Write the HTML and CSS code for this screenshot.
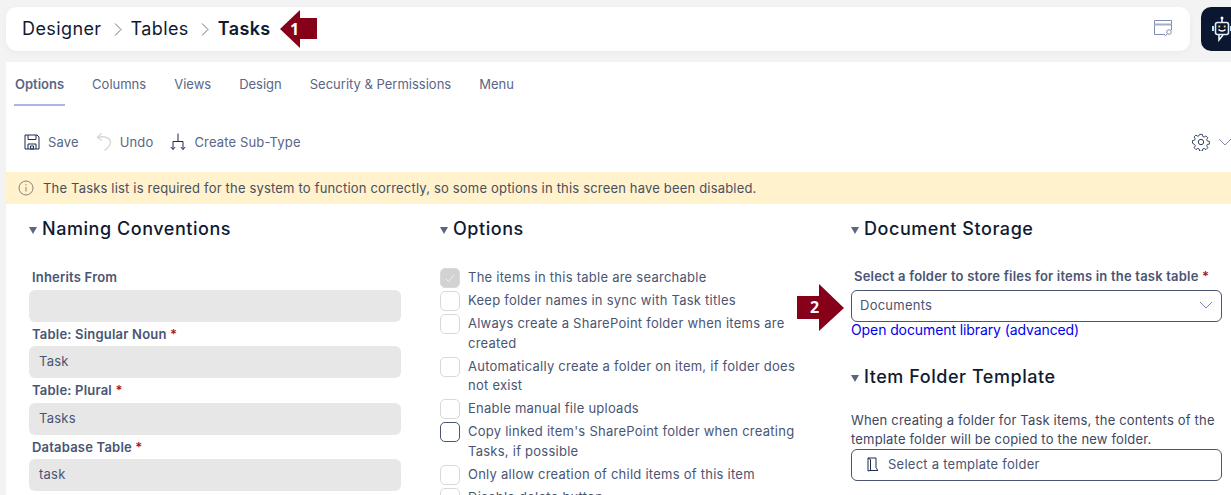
FILE: index.html
```html
<!DOCTYPE html>
<html lang="en">
<head>
  <meta charset="UTF-8">
  <title>Tasks - Table Designer</title>
  <link rel="stylesheet" href="styles.css">
</head>
<body>

<div class="topbar">
  <div class="crumbs">
    <span>Designer</span>
    <svg class="crumb-sep" viewBox="0 0 8 13"><path d="M1 .5l6 6-6 6"/></svg>
    <span>Tables</span>
    <svg class="crumb-sep" viewBox="0 0 8 13"><path d="M1 .5l6 6-6 6"/></svg>
    <b>Tasks</b>
    <svg class="window-icon" viewBox="0 0 19 17">
      <path d="M11 14.500H.5V.5h17V10"/>
      <path class="thick" d="M.5 4.500h17"/>
      <circle cx="15" cy="12" r="2.300"/>
      <path d="M13.300 13.800L10.800 16.400"/>
    </svg>
  </div>
  <div class="bot">
    <svg viewBox="0 0 22 26">
      <circle cx="10" cy="2" r="1.500" fill="#fff"/>
      <path d="M10 3v3" stroke="#fff" stroke-width="1.500"/>
      <rect x="3.500" y="6.500" width="13" height="12" rx="2" fill="none" stroke="#dff1ff" stroke-width="1.600"/>
      <path d="M1 10v5M19 10v5" stroke="#bfe4ff" stroke-width="2"/>
      <path d="M6.400 9.500h1.800v2H6.400zM11.800 9.500h1.800v2h-1.800z" fill="#ffc55c"/>
      <path d="M6.500 13.500c2 2 5 2 7 0" fill="none" stroke="#fff" stroke-width="1.500"/>
      <path d="M7 19v5l4-5" fill="none" stroke="#fff" stroke-width="1.500"/>
    </svg>
  </div>
</div>

<div class="panel">
  <div class="tabs">
    <a class="tab active">Options</a>
    <a class="tab">Columns</a>
    <a class="tab">Views</a>
    <a class="tab">Design</a>
    <a class="tab">Security &amp; Permissions</a>
    <a class="tab">Menu</a>
  </div>

  <div class="toolbar">
    <button class="tool">
      <svg viewBox="0 0 16 16" class="tool-icon">
        <path d="M1 1h12l2 2v12H1z"/>
        <path d="M4 1v4.500h8V1"/>
        <path d="M4 15v-5h8v5"/>
        <path d="M6.500 12h3v3h-3z"/>
      </svg>
      Save
    </button>
    <button class="tool">
      <svg viewBox="0 0 16 18" class="tool-icon undo">
        <path d="M5.500 .5L1.500 4.500l4.500 3"/>
        <path d="M1.500 4.500C7 3 13.500 4 14.500 8.500c.6 2.800-1.500 5.500-6 9"/>
      </svg>
      Undo
    </button>
    <button class="tool">
      <svg viewBox="0 0 16 18" class="tool-icon">
        <path d="M8 .5v8M3 8.500h10M3 8.500v8M13 8.500v8"/>
        <path d="M.8 14l2.200 2.500L5.200 14M10.800 14l2.200 2.500 2.200-2.500"/>
      </svg>
      Create Sub-Type
    </button>
    <div class="settings">
      <svg class="gear" viewBox="0 0 20 20">
        <path d="M8.400 1h3.200l.5 2.500 1.600.7 2.200-1.400 2.200 2.200-1.400 2.200.7 1.600 2.500.5v3.200l-2.500.5-.7 1.600 1.400 2.200-2.200 2.200-2.200-1.400-1.600.7-.5 2.500H8.400l-.5-2.500-1.600-.7-2.200 1.400-2.200-2.200 1.400-2.200-.7-1.600L0 11.500V8.300l2.500-.5.700-1.600-1.400-2.200L4 1.800l2.200 1.400 1.600-.7z" transform="translate(.6 .6) scale(.94)"/>
        <circle cx="10" cy="10" r="3"/>
      </svg>
      <svg class="chevron" viewBox="0 0 14 8"><path d="M1 1l6 6 6-6"/></svg>
    </div>
  </div>

  <div class="notice">
    <svg viewBox="0 0 16 16">
      <circle cx="8" cy="8" r="7"/>
      <path d="M8 7v4.500M8 4.200v1.300"/>
    </svg>
    The Tasks list is required for the system to function correctly, so some options in this screen have been disabled.
  </div>

  <div class="columns">
    <section>
      <h3><i class="caret"></i>Naming Conventions</h3>
      <div class="form-fields">
        <label>Inherits From</label>
        <div class="input disabled"></div>
        <label>Table: Singular Noun <em>*</em></label>
        <div class="input disabled">Task</div>
        <label>Table: Plural <em>*</em></label>
        <div class="input disabled">Tasks</div>
        <label>Database Table <em>*</em></label>
        <div class="input disabled">task</div>
      </div>
    </section>

    <section>
      <h3><i class="caret"></i>Options</h3>
      <div class="checks">
        <div class="check"><span class="box ticked"><svg viewBox="0 0 12 10"><path d="M1.500 5.500l3 3 6-7"/></svg></span>The items in this table are searchable</div>
        <div class="check"><span class="box"></span>Keep folder names in sync with Task titles</div>
        <div class="check"><span class="box"></span>Always create a SharePoint folder when items are created</div>
        <div class="check"><span class="box"></span>Automatically create a folder on item, if folder does not exist</div>
        <div class="check"><span class="box"></span>Enable manual file uploads</div>
        <div class="check"><span class="box focus"></span>Copy linked item's SharePoint folder when creating Tasks, if possible</div>
        <div class="check"><span class="box"></span>Only allow creation of child items of this item</div>
        <div class="check"><span class="box"></span>Disable delete button</div>
      </div>
    </section>

    <section>
      <h3><i class="caret"></i>Document Storage</h3>
      <label class="folder-label">Select a folder to store files for items in the task table <em>*</em></label>
      <div class="input select">
        Documents
        <svg class="chevron" viewBox="0 0 14 8"><path d="M1 1l6 6 6-6"/></svg>
      </div>
      <a class="link">Open document library (advanced)</a>

      <h3 class="second"><i class="caret"></i>Item Folder Template</h3>
      <p class="help">When creating a folder for Task items, the contents of the template folder will be copied to the new folder.</p>
      <div class="input select picker">
        <svg viewBox="0 0 12 15">
          <path d="M1 1h8v9.500l1.800 3H3L1 14z"/>
          <path d="M1 1l2.500 1.500V14"/>
        </svg>
        Select a template folder
      </div>
    </section>
  </div>
</div>

<svg class="callout callout-one" viewBox="0 0 38 38"><polygon points="0,19 20,0 20,8 37,8 37,29 20,29 20,38"/></svg>
<span class="callout-num num-one">1</span>
<svg class="callout callout-two" viewBox="0 0 47 47"><polygon points="0,12 22,12 22,0 47,24 22,47 22,35 0,35"/></svg>
<span class="callout-num num-two">2</span>

</body>
</html>
```

FILE: styles.css
```css
html, body {
  margin: 0;
  height: 495px;
  overflow: hidden;
}

body {
  position: relative;
  background: #f3f3f3;
  padding: 7px 0 0 6px;
  box-sizing: border-box;
  width: 1231px;
  font-family: "Inter", "Open Sans", sans-serif;
  font-size: 13px;
  letter-spacing: 0.25px;
  color: #4a5573;
}

svg {
  fill: none;
  stroke: currentColor;
  flex: none;
}

/* top bar */
.topbar {
  display: flex;
  gap: 11px;
  height: 44px;
}

.crumbs {
  flex: none;
  width: 1184px;
  box-sizing: border-box;
  background: #fff;
  border-radius: 11px;
  box-shadow: 0 2px 6px rgba(0,0,0,0.04);
  display: flex;
  align-items: center;
  padding: 0 17px 2px 16px;
  font-size: 18px;
  letter-spacing: 0.4px;
  color: #101a33;
}

.crumbs b {
  font-weight: 600;
}

.crumb-sep {
  width: 8px;
  height: 13px;
  margin: 2px 9px 0 12px;
  color: #6b7280;
}

.window-icon {
  margin-left: auto;
  width: 19px;
  height: 17px;
  color: #7f8db5;
}

.window-icon .thick {
  stroke-width: 2;
  color: #a3adc7;
}

.bot {
  width: 40px;
  flex: none;
  background: #0b1730;
  border-radius: 10px 0 0 10px;
  padding: 9px 0 0 11px;
  box-sizing: border-box;
}

.bot svg {
  width: 22px;
  height: 26px;
  stroke: none;
}

/* main panel */
.panel {
  margin-top: 11px;
  background: #fff;
  height: 440px;
  width: 1225px;
  overflow: hidden;
}

.tabs {
  display: flex;
  height: 44px;
  padding-left: 8px;
  gap: 26px;
  letter-spacing: 0;
}

.tab {
  padding: 0 1px;
  line-height: 44px;
  color: #5a6684;
  box-sizing: border-box;
}

.tab.active {
  font-weight: 600;
  border-bottom: 2px solid #a9b8e0;
  height: 44px;
}

.toolbar {
  display: flex;
  align-items: center;
  height: 32px;
  margin-top: 20px;
  padding-left: 18px;
  gap: 17px;
  letter-spacing: 0.15px;
}

.tool {
  display: flex;
  align-items: center;
  gap: 8px;
  background: none;
  border: none;
  padding: 0;
  font: inherit;
  letter-spacing: inherit;
  color: #5a6684;
}

.tool-icon {
  width: 16px;
  height: 18px;
  color: #1c2a4d;
}

.tool-icon.undo {
  color: #d8d8d8;
  stroke-width: 1.4;
}

.settings {
  margin-left: auto;
  display: flex;
  align-items: center;
  gap: 8px;
  margin-right: -1px;
  color: #1c2a4d;
}

.gear {
  width: 18px;
  height: 18px;
}

.chevron {
  width: 14px;
  height: 8px;
  color: #7f8db5;
}

.notice {
  display: flex;
  align-items: center;
  gap: 9px;
  height: 32px;
  margin-top: 14px;
  padding-left: 12px;
  background: #fff2cc;
  letter-spacing: 0.18px;
  color: #4a4f5f;
}

.notice svg {
  width: 16px;
  height: 16px;
  color: #8a8373;
}

/* three columns */
.columns {
  display: grid;
  grid-template-columns: 372px 372px 371px;
  column-gap: 39px;
  padding: 13px 0 0 23px;
}

h3 {
  margin: 0;
  font-size: 18px;
  line-height: 24px;
  font-weight: 500;
  letter-spacing: 0.55px;
  color: #101a33;
  display: flex;
  align-items: center;
}

.caret {
  width: 0;
  height: 0;
  border-left: 4px solid transparent;
  border-right: 4px solid transparent;
  border-top: 7px solid #5a6684;
  margin: 3px 5px 0 0;
}

.form-fields {
  margin-top: 24px;
}

label {
  display: block;
  font-weight: 600;
  line-height: 24.5px;
  padding-left: 3px;
  letter-spacing: 0.2px;
  color: #4a5573;
}

em {
  color: #a5142c;
  font-style: normal;
}

.input {
  height: 32px;
  box-sizing: border-box;
  border-radius: 6px;
  display: flex;
  align-items: center;
  padding: 0 10px 2px;
}

.input.disabled {
  background: #e7e7e7;
}

.checks {
  margin-top: 27px;
  display: flex;
  flex-direction: column;
  gap: 3px;
}

.check {
  display: flex;
  gap: 8px;
  line-height: 19.75px;
  min-height: 20px;
  width: 356px;
  padding-left: 28px;
  box-sizing: border-box;
  position: relative;
}

.box {
  position: absolute;
  left: 0;
  top: 0;
  width: 20px;
  height: 20px;
  box-sizing: border-box;
  border: 1px solid #d9d9d9;
  border-radius: 5px;
}

.box.ticked {
  background: #d2d2d2;
  display: flex;
  align-items: center;
  justify-content: center;
}

.box.ticked svg {
  width: 12px;
  height: 10px;
  color: #eee;
}

.box.focus {
  border-color: #4a5573;
}

.folder-label {
  margin-top: 24px;
  line-height: 22px;
}

.input.select {
  border: 1px solid #4a5573;
  justify-content: space-between;
  padding: 0 8px 2px;
  margin-top: 3px;
}

.link {
  display: block;
  color: #0000ee;
  font-size: 14px;
  letter-spacing: -0.1px;
  line-height: 15px;
}

h3.second {
  margin-top: 28px;
}

.help {
  margin: 22px 0 0;
  line-height: 19px;
  letter-spacing: 0.18px;
  color: #3d4760;
}

.input.select.picker {
  justify-content: flex-start;
  gap: 9px;
  padding-left: 15px;
  margin-top: 0;
}

.picker svg {
  width: 12px;
  height: 15px;
  color: #1c2a4d;
}

/* numbered callouts laid over the screenshot */
.callout {
  position: absolute;
  stroke: none;
  fill: #850018;
}

.callout-one {
  left: 280px;
  top: 10px;
  width: 38px;
  height: 38px;
}

.callout-two {
  left: 797px;
  top: 284px;
  width: 47px;
  height: 47px;
}

.callout-num {
  position: absolute;
  color: #fff;
  font-family: "Open Sans", sans-serif;
  font-weight: 700;
  font-size: 16px;
  line-height: 20px;
}

.num-one {
  left: 290px;
  top: 19px;
}

.num-two {
  left: 810px;
  top: 297px;
}
```
